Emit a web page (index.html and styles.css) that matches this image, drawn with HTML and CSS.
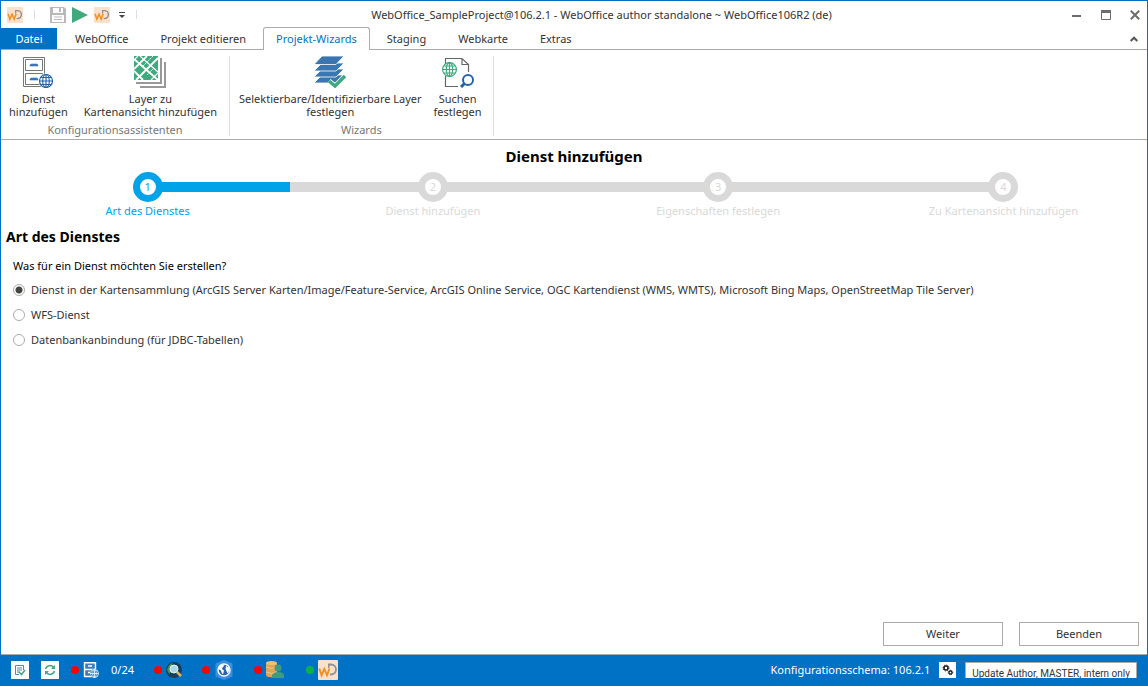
FILE: index.html
```html
<!DOCTYPE html>
<html lang="de">
<head>
<meta charset="utf-8">
<title>WebOffice author standalone</title>
<link rel="stylesheet" href="styles.css">
</head>
<body>
<svg class="defs" aria-hidden="true">
  <symbol id="logo" viewBox="0 0 20 20">
    <rect width="20" height="20" rx="1" fill="#fbe0cb"/>
    <path d="M10 4.500H13A5 5 0 0 1 13 14.500H12" fill="none" stroke="#8f8f8f" stroke-width="1.800"/>
    <path d="M10.800 4.500V8" fill="none" stroke="#8f8f8f" stroke-width="1.500"/>
    <path d="M1.300 8.500L3.600 15.300L6.300 9L9 15.300L11.500 8.500" fill="none" stroke="#ee9022" stroke-width="1.900"/>
  </symbol>
</svg>
<div class="window">
  <header class="titlebar">
    <div class="quick">
      <svg class="i16"><use href="#logo"/></svg>
      <span class="sep"></span>
      <button class="tool" aria-label="Speichern"><svg class="i16" viewBox="0 0 16 16"><path d="M0 0H14L16 2V16H0Z" fill="#b9b9b9"/><path d="M3 1H13V6H3ZM2 8H14V15H2Z" fill="#fff"/><path d="M9 1H11V5H9ZM4 9.500H12V10.500H4ZM4 12H12V13H4Z" fill="#b9b9b9"/></svg></button>
      <button class="tool" aria-label="Starten"><svg class="i16" viewBox="0 0 16 16"><path d="M0 0L16 8L0 16Z" fill="#40a97e"/></svg></button>
      <button class="tool" aria-label="WebOffice"><svg class="i16"><use href="#logo"/></svg></button>
      <button class="tool" aria-label="Anpassen"><svg class="i6" viewBox="0 0 6 6"><path d="M0 0H6V1H0ZM0 3H6L3 6Z" fill="#444"/></svg></button>
      <span class="sep"></span>
    </div>
    <h1 class="caption">WebOffice_SampleProject@106.2.1 - WebOffice author standalone ~ WebOffice106R2 (de)</h1>
    <div class="controls">
      <button class="tool" aria-label="Minimieren"><svg class="i10" viewBox="0 0 10 10"><path d="M0 5H9V7H0Z" fill="#6d6d6d"/></svg></button>
      <button class="tool" aria-label="Maximieren"><svg class="i10" viewBox="0 0 10 10"><path d="M.5 1V9.500H9.500V1" fill="none" stroke="#6d6d6d"/><path d="M0 0H10V3H0Z" fill="#6d6d6d"/></svg></button>
      <button class="tool" aria-label="Schließen"><svg class="i10" viewBox="0 0 10 10"><path d="M.8 .8L9.200 9.200M9.200 .8L.8 9.200" stroke="#6d6d6d" stroke-width="2"/></svg></button>
    </div>
  </header>
  <nav class="tabs">
    <button class="file">Datei</button>
    <button class="tab">WebOffice</button>
    <button class="tab">Projekt editieren</button>
    <button class="tab active">Projekt-Wizards</button>
    <button class="tab">Staging</button>
    <button class="tab">Webkarte</button>
    <button class="tab">Extras</button>
    <button class="tool collapse" aria-label="Menüband reduzieren"><svg class="i8" viewBox="0 0 8 8"><path d="M.7 6L4 2.700L7.300 6" fill="none" stroke="#555" stroke-width="2"/></svg></button>
  </nav>
  <section class="ribbon">
    <div class="group first">
      <div class="commands">
        <button class="command"><svg class="i32" viewBox="0 0 32 32"><path d="M1.500 1.500H22.500V30.500H1.500Z" fill="#fff" stroke="#777"/><path d="M3.500 3.500H20.500V14.500H3.500ZM3.500 17.500H20.500V28.500H3.500Z" fill="#fff" stroke="#777"/><path d="M8 10V9L9 8H15L16 9V10ZM8 24V23L9 22H15L16 23V24Z" fill="#3c76b0" stroke="#3c76b0" stroke-width=".6"/><circle cx="24" cy="25" r="7.500" fill="#fff"/><g fill="none" stroke="#2664a8" stroke-width="1.200"><circle cx="24" cy="25" r="6.500"/><ellipse cx="24" cy="25" rx="3.300" ry="6.500"/><path d="M24 18V32M17 25H31M18.500 21.500H29.500M18.500 28.500H29.500"/></g></svg><span>Dienst<br>hinzufügen</span></button>
        <button class="command"><svg class="i32" viewBox="0 0 32 32"><path d="M6 31H31V6M2 27H27V2" fill="none" stroke="#999" stroke-width="2"/><rect width="24" height="24" fill="#40a97e"/><path d="M13 0L0 13M0 3L24 24M24 2L2 24M0 15L9 24" stroke="#fff" stroke-width="1.800" fill="none"/><path d="M6 0L24 16M17 24L24 17M4 0L0 4" stroke="#fff" stroke-width="1.200" fill="none"/><path d="M19 0L9 10M13 19L19 13" stroke="#fff" stroke-width="1" stroke-dasharray="2 1" fill="none"/></svg><span>Layer zu<br>Kartenansicht hinzufügen</span></button>
      </div>
      <div class="legend">Konfigurationsassistenten</div>
    </div>
    <div class="group second">
      <div class="commands">
        <button class="command"><svg class="i32" viewBox="0 0 32 32"><g fill="#3c76b0" stroke="#fff" stroke-width=".8"><path d="M0 27L8 19H30L22 27Z"/><path d="M0 21L8 13H30L22 21Z"/><path d="M0 15L8 7H30L22 15Z"/><path d="M0 8.500L8 0H30L22 8.500Z"/></g><path d="M15 25L21 30L31 20" fill="none" stroke="#fff" stroke-width="5"/><path d="M15 25L21 30L31 20" fill="none" stroke="#40a97e" stroke-width="3.500"/></svg><span>Selektierbare/Identifizierbare Layer<br>festlegen</span></button>
        <button class="command"><svg class="i32" viewBox="0 0 32 32"><path d="M3.500 8V2.500H20L26.500 8.500V16M20 2.500V8.500H26.500M3.500 20V30.500H16" fill="none" stroke="#666" stroke-width="1.200"/><circle cx="7.500" cy="13.500" r="7" fill="#fff"/><g fill="none" stroke="#40a97e" stroke-width="1.200"><circle cx="7.500" cy="13.500" r="6.900"/><ellipse cx="7.500" cy="13.500" rx="3.200" ry="6.900"/><path d="M7.500 6.500V20.500M.5 13.500H14.500M1.500 10H13.500M1.500 17H13.500"/></g><circle cx="26" cy="24" r="5" fill="#fff" stroke="#2664a8" stroke-width="2"/><path d="M22.500 27.500L19 31" stroke="#2664a8" stroke-width="3"/></svg><span>Suchen<br>festlegen</span></button>
      </div>
      <div class="legend">Wizards</div>
    </div>
  </section>
  <main class="page">
    <h2 class="heading center">Dienst hinzufügen</h2>
    <ol class="steps">
      <li class="step current"><span class="dot">1</span><span>Art des Dienstes</span></li>
      <li class="step"><span class="dot">2</span><span>Dienst hinzufügen</span></li>
      <li class="step"><span class="dot">3</span><span>Eigenschaften festlegen</span></li>
      <li class="step"><span class="dot">4</span><span>Zu Kartenansicht hinzufügen</span></li>
    </ol>
    <h3 class="heading">Art des Dienstes</h3>
    <fieldset class="choices">
      <legend>Was für ein Dienst möchten Sie erstellen?</legend>
      <label><input type="radio" name="service" checked>Dienst in der Kartensammlung (ArcGIS Server Karten/Image/Feature-Service, ArcGIS Online Service, OGC Kartendienst (WMS, WMTS), Microsoft Bing Maps, OpenStreetMap Tile Server)</label>
      <label><input type="radio" name="service">WFS-Dienst</label>
      <label><input type="radio" name="service">Datenbankanbindung (für JDBC-Tabellen)</label>
    </fieldset>
    <div class="actions"><button>Weiter</button><button>Beenden</button></div>
  </main>
  <footer class="status">
    <button class="tile" aria-label="Protokoll"><svg class="i12" viewBox="0 0 12 12"><path d="M1.500 1.500H9.500V6M1.500 1.500V10.500H5" fill="none" stroke="#5b84b1"/><path d="M3 4H8M3 6H8M3 8H6" stroke="#5b84b1"/><path d="M5 8L7.500 10.500L11 6" fill="none" stroke="#40a97e" stroke-width="1.500"/></svg></button>
    <button class="tile" aria-label="Aktualisieren"><svg class="i12" viewBox="0 0 12 12"><path d="M1.500 5A4.500 4.500 0 0 1 9.500 3.500M10.500 7A4.500 4.500 0 0 1 2.500 8.500" fill="none" stroke="#40a97e" stroke-width="1.500"/><path d="M11 1V5H7ZM1 11V7H5Z" fill="#40a97e"/></svg></button>
    <span class="lamp"><i></i><svg class="i16" viewBox="0 0 16 16"><path d="M1.500 .7H12.500V14.500H1.500Z" fill="#3d7dbd" stroke="#fff" stroke-width="1.400"/><path d="M1 7.500H12M5 4H9M5 10.500H8" stroke="#fff" stroke-width="1.400"/><circle cx="11.500" cy="11.500" r="4.500" fill="#0072c6"/><g fill="none" stroke="#fff" stroke-width=".8"><circle cx="11.500" cy="11.500" r="4"/><ellipse cx="11.500" cy="11.500" rx="1.800" ry="4"/><path d="M11.500 7.500V15.500M7.500 11.500H15.500"/></g></svg></span>
    <span class="count">0/24</span>
    <span class="lamp wide"><i></i><svg class="i16" viewBox="0 0 16 16"><circle cx="8" cy="8" r="8" fill="#173f5b"/><path d="M1 8Q2 2 7 1L5 5L7 8L3 12Z" fill="#3d945d"/><circle cx="8" cy="7" r="4" fill="#a9d8e9" stroke="#e4f2f4"/><path d="M11 10L15 14" stroke="#d9b56b" stroke-width="2.500"/></svg></span>
    <span class="lamp wide"><i></i><svg class="i20" viewBox="0 0 20 20"><path d="M10 0L18.500 3.500V16.500L10 20L1.500 16.500V3.500Z" fill="#3b8fe0"/><circle cx="10" cy="10" r="6" fill="#2862ac" stroke="#fff" stroke-width="1.400"/><path d="M5 7L8 4.500L10.500 5.500L8.500 7.500L8 9L10 10.500L9 14.500L7.500 12.500L7 10.500L5 9.500Z" fill="#fff"/><path d="M12 6L15 7.500V11L13.500 13.500L12.500 11L11.500 9Z" fill="#fff"/></svg></span>
    <span class="lamp wide"><i></i><svg class="i20" viewBox="0 0 20 20"><path d="M0 3V15C0 18 11 18 11 15V3Z" fill="#dfa456"/><ellipse cx="5.500" cy="3" rx="5.500" ry="2" fill="#f0c078"/><path d="M0 7Q5.500 10 11 7M0 12Q5.500 15 11 12" fill="none" stroke="#f2c88a"/><circle cx="12" cy="8" r="3.500" fill="#3f9c83"/><path d="M6 18V15Q8 12 12 12Q17 12 18 15V18Z" fill="#3f9c83"/></svg></span>
    <span class="lamp wide ok"><i></i><svg class="i20"><use href="#logo"/></svg></span>
    <div class="info">
      <span>Konfigurationsschema: 106.2.1</span>
      <button class="gears" aria-label="Einstellungen"><svg class="i12" viewBox="0 0 12 12"><g fill="none" stroke="#222"><circle cx="4" cy="4" r="2" stroke-width="1.600"/><circle cx="4" cy="4" r="3" stroke-dasharray="1.200 1.150"/><circle cx="8.500" cy="8.500" r="1.500" stroke-width="1.300"/><circle cx="8.500" cy="8.500" r="2.300" stroke-dasharray="1 .8"/></g></svg></button>
      <span class="roles">Update Author, MASTER, intern only</span>
    </div>
  </footer>
</div>
</body>
</html>
```
FILE: styles.css
```css
* { box-sizing: border-box; }
body { margin: 0; font: 11px/16px "Noto Sans", "Open Sans", sans-serif; color: #333; background: #fff; }
button { font: inherit; color: inherit; background: none; border: 0; padding: 0; white-space: nowrap; }
svg { display: block; flex: none; }
.defs { position: absolute; width: 0; height: 0; }
.i6 { width: 6px; height: 6px; }
.i8 { width: 8px; height: 8px; }
.i10 { width: 10px; height: 10px; }
.i12 { width: 12px; height: 12px; }
.i16 { width: 16px; height: 16px; }
.i20 { width: 20px; height: 20px; }
.i32 { width: 32px; height: 32px; }

.window { min-height: 100vh; display: flex; flex-direction: column; border: 1px solid #0072c6; }
.titlebar { display: grid; grid-template-columns: 1fr auto 1fr; align-items: center; height: 27px; padding: 0 7px 0 6px; }
.caption { margin: 0 0 0 56px; font-size: 11px; font-weight: 400; white-space: nowrap; }
.quick { display: flex; align-items: center; gap: 6px; }
.sep { width: 1px; height: 9px; background: #ddd; margin: 0 4px 0 5px; }
.sep + .tool { margin-left: 5px; }
.quick .tool:nth-of-type(4) { margin-left: 3px; }
.controls { display: flex; justify-content: flex-end; gap: 19px; }

.tabs { display: flex; height: 22px; border-bottom: 1px solid #ababab; }
.file { width: 56px; background: #0072c6; color: #fff; }
.tab { padding: 0 16px; }
.file + .tab { margin-left: 2px; }
.tab.active { height: 23px; margin: -1px 1px 0; padding: 0 12px; border: 1px solid #ababab; border-bottom: 0; border-radius: 3px 3px 0 0; background: #fff; color: #0072c6; }
.collapse { margin-left: auto; padding-right: 9px; }

.ribbon { display: flex; height: 90px; padding: 6px 0 3px; border-bottom: 1px solid #ababab; }
.group { display: flex; flex-direction: column; border-right: 1px solid #ddd; }
.commands { display: flex; gap: 16px; padding: 0 12px 0 8px; }
.second .commands { gap: 12px; padding: 0 11px 0 9px; }
.command { display: flex; flex-direction: column; align-items: center; gap: 4px; line-height: 13px; }
.legend { text-align: center; color: #777; line-height: 14px; margin-top: 5px; }

.page { flex: 1; display: flex; flex-direction: column; padding: 6px 8px 8px 5px; border-bottom: 1px solid #ababab; }
.heading { margin: 0; font-size: 14px; line-height: 20px; color: #000; }
.center { font-size: 15px; text-align: center; margin-right: -3px; }
.steps { list-style: none; display: grid; grid-template-columns: repeat(4, 1fr); margin: 6px -7px 8px -1px; padding: 0; color: #d9d9d9; }
.step { display: flex; flex-direction: column; align-items: center; gap: 1px; white-space: nowrap; background: linear-gradient(#d9d9d9, #d9d9d9) 0 10px / 100% 10px no-repeat; }
.step.current { color: #00a2e8; background: linear-gradient(#00a2e8, #00a2e8) 100% 10px / 50% 10px no-repeat; }
.step:last-child { background-size: 50% 10px; }
.dot { width: 30px; height: 30px; display: grid; place-items: center; border: 7px solid; border-radius: 50%; background: #fff; }
.choices { border: 0; margin: 10px 0 0 7px; padding: 0; display: flex; flex-direction: column; }
.choices legend { line-height: 18px; color: #000; padding: 0; margin-bottom: 2px; }
.choices label { display: flex; align-items: center; gap: 6px; min-height: 25px; }
.choices input { appearance: none; flex: none; width: 12px; height: 12px; margin: 0; border: 1px solid #ababab; border-radius: 50%; background: #fff; }
.choices input:checked { background: radial-gradient(circle, #444 3px, #fff 4px); }
.actions { display: flex; justify-content: flex-end; gap: 16px; margin-top: auto; }
.actions button { width: 120px; height: 24px; border: 1px solid #ababab; }

.status { display: flex; align-items: center; height: 30px; padding: 0 10px; gap: 12px; background: #0072c6; color: #fff; white-space: nowrap; }
.tile { width: 18px; height: 18px; display: grid; place-items: center; background: #fff; }
.lamp { display: flex; align-items: center; gap: 4px; }
.lamp i { width: 8px; height: 8px; border-radius: 50%; background: #f00; }
.lamp.ok i { background: #0db14b; }
.wide { margin-left: 8px; }
.info { display: flex; align-items: center; gap: 9px; margin-left: auto; }
.gears { width: 17px; height: 16px; display: grid; place-items: center; background: #fff; }
.roles { height: 16px; padding: 4px 6px 0; border: 1px solid #ababab; border-bottom: 0; overflow: hidden; background: #fff; color: #333; font: 10px/14px Roboto, sans-serif; }
```
